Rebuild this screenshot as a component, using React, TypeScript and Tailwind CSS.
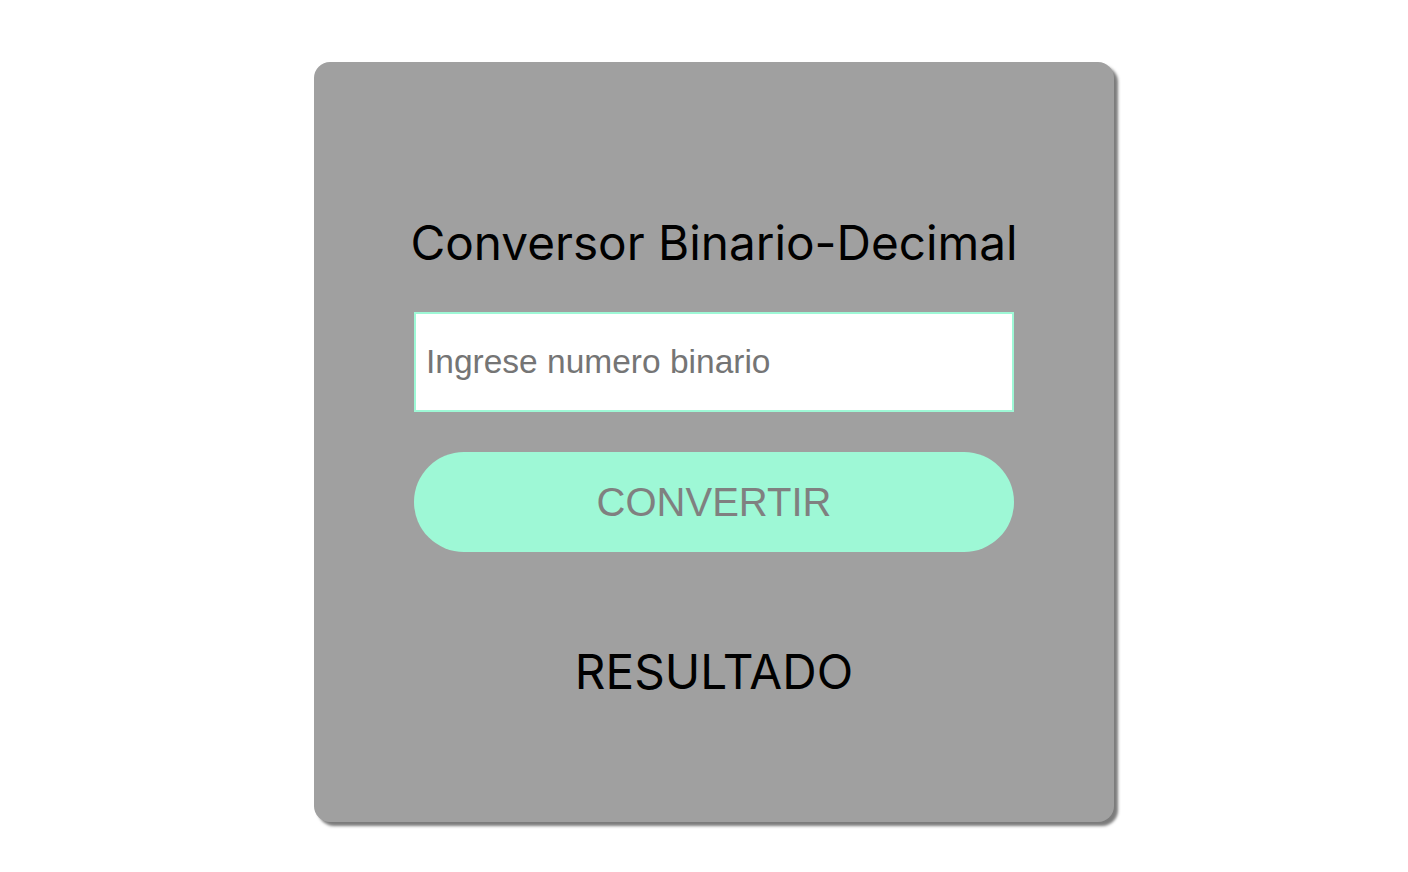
import { useState } from "react";

const App = () => {
  const [value, setValue] = useState("");
  const [result, setResult] = useState("RESULTADO");

  const convert = () => {
    if (/^[01]+$/.test(value)) setResult(String(parseInt(value, 2)));
    else setResult("RESULTADO");
  };

  return (
    <div className="min-h-screen w-full bg-white flex justify-center pt-[62px] pl-5">
      <div className="w-[800px] h-[760px] rounded-2xl bg-[#a0a0a0] shadow-[4px_4px_3px_#7c7c7c] flex flex-col items-center pt-[152px]">
        <h1 className="font-['Inter',sans-serif] text-[47.7px] leading-[58px] text-black">
          Conversor Binario-Decimal
        </h1>
        <input
          autoFocus
          value={value}
          onChange={(e) => setValue(e.target.value)}
          placeholder="Ingrese numero binario"
          className="mt-10 w-[600px] h-[100px] bg-white border-2 border-[#9ef8d6] px-[10px] font-['Liberation_Sans',Arial,sans-serif] text-[33.5px] text-black placeholder:text-[#757575] outline-none caret-black"
        />
        <button
          onClick={convert}
          className="mt-10 w-[600px] h-[100px] rounded-full bg-[#9ef8d6] font-['Liberation_Sans',Arial,sans-serif] text-[40px] text-[#808080]"
        >
          CONVERTIR
        </button>
        <p className="mt-[91px] font-['Inter',sans-serif] text-[47.7px] leading-[58px] text-black">
          {result}
        </p>
      </div>
    </div>
  );
};

export default App;
